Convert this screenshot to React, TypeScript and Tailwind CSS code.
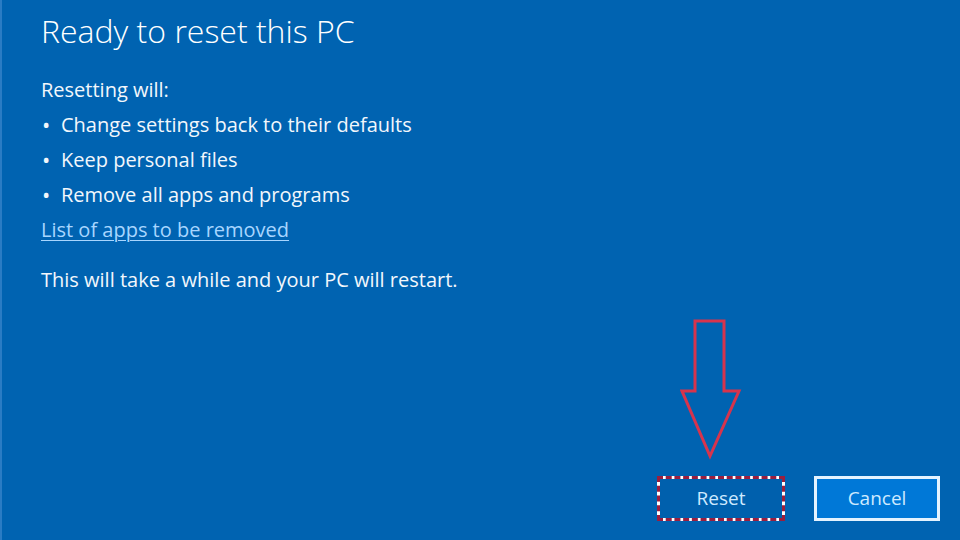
export default function App() {
  const items = [
    'Change settings back to their defaults',
    'Keep personal files',
    'Remove all apps and programs',
  ]

  return (
    <div
      className="relative flex h-[540px] w-[960px] flex-col overflow-hidden border-l-2 border-[#2a7cc4] bg-[#0063b1] text-[#f2f7fc]"
      style={{ fontFamily: '"Open Sans", "Noto Sans", sans-serif' }}
    >
      <div className="pl-[39px] pt-[9px]">
        <h1 className="text-[32px] font-light leading-[44px] text-white">
          Ready to reset this PC
        </h1>

        <div className="mt-[19px] text-[20px] leading-[35px]">
          <p>Resetting will:</p>
          <ul>
            {items.map((item) => (
              <li key={item} className="flex items-center">
                <span className="w-[20px] pl-[1px] text-[22px] leading-[35px]">•</span>
                <span>{item}</span>
              </li>
            ))}
          </ul>
          <a className="text-[#a8d6ff] underline decoration-1 underline-offset-[3px]">
            List of apps to be removed
          </a>
          <p className="mt-[15px]">This will take a while and your PC will restart.</p>
        </div>
      </div>

      <div className="mt-auto flex justify-end gap-[29px] pb-[19px] pr-[20px]">
        <div className="bg-white">
          <button className="h-[45px] w-[128px] border-[3px] border-dashed border-[#9a1f3f] bg-[#0060ad] bg-clip-padding text-[19px] text-[#cfeaff]">
            Reset
          </button>
        </div>
        <button className="h-[45px] w-[126px] border-[3px] border-[#e4f3ff] bg-[#0078d7] text-[19px] text-[#cfeaff]">
          Cancel
        </button>
      </div>

      <svg
        className="absolute left-[678px] top-[319px]"
        width="62"
        height="142"
        viewBox="0 0 62 142"
        fill="none"
      >
        <path
          d="M15 2 H44 V72 H59 L30 137 L2 72 H15 Z"
          stroke="#d7344d"
          strokeWidth="3"
          strokeLinejoin="miter"
        />
      </svg>
    </div>
  )
}
